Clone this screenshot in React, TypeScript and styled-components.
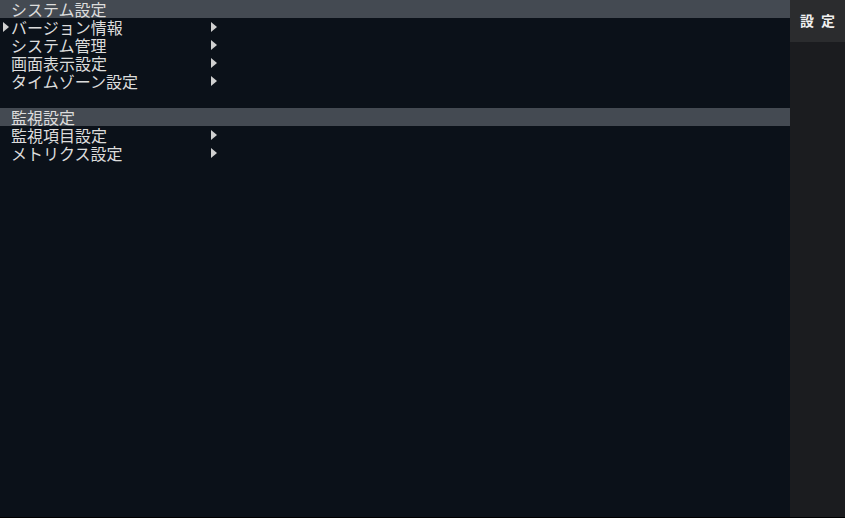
import * as React from 'react';
import styled, {createGlobalStyle} from 'styled-components';

const GlobalStyle = createGlobalStyle`
    html, body {
        margin: 0;
        padding: 0;
        background: #000;
    }
    body {
        font-family: "Noto Sans CJK JP", "Noto Sans", sans-serif;
    }
`;

const Screen = styled.div`
    display: flex;
    width: 845px;
    height: 517px;
    border-bottom: 1px solid #000;
    overflow: hidden;
`;

const Main = styled.div`
    flex: 1;
    background: #0b1119;
    display: flex;
    flex-direction: column;
`;

const Section = styled.div`
    display: flex;
    flex-direction: column;
    margin-bottom: 18px;
`;

const SectionTitle = styled.div`
    height: 18px;
    line-height: 18px;
    background: #444a52;
    color: #dcdcdc;
    font-size: 16px;
    padding-left: 11px;
`;

const Row = styled.div`
    position: relative;
    height: 18px;
    line-height: 18px;
    color: #dcdcdc;
    font-size: 16px;
    padding-left: 11px;
    width: 206px;
`;

const Triangle = styled.span<{ left: number }>`
    position: absolute;
    top: 4px;
    left: ${(props) => props.left}px;
    width: 0;
    height: 0;
    border-top: 5.5px solid transparent;
    border-bottom: 5.5px solid transparent;
    border-left: 6px solid #d0d0d0;
`;

const Sidebar = styled.div`
    width: 55px;
    background: #1b1c1f;
    display: flex;
    flex-direction: column;
`;

const Tab = styled.div`
    height: 42px;
    background: #2b2c2e;
    color: #f0f0f0;
    font-size: 14px;
    font-weight: bold;
    display: flex;
    align-items: center;
    justify-content: center;
    letter-spacing: 7px;
    padding-left: 7px;
    padding-bottom: 2px;
    box-sizing: border-box;
`;

interface ItemType {
    label: string;
    selected?: boolean;
}

const sections: { title: string; items: ItemType[] }[] = [
    {
        title: 'システム設定',
        items: [
            {label: 'バージョン情報', selected: true},
            {label: 'システム管理'},
            {label: '画面表示設定'},
            {label: 'タイムゾーン設定'},
        ],
    },
    {
        title: '監視設定',
        items: [
            {label: '監視項目設定'},
            {label: 'メトリクス設定'},
        ],
    },
];

export default function App() {
    return (
        <>
            <GlobalStyle/>
            <Screen>
                <Main>
                    {sections.map((s) => (
                        <Section key={s.title}>
                            <SectionTitle>{s.title}</SectionTitle>
                            {s.items.map((item) => (
                                <Row key={item.label}>
                                    {item.selected && <Triangle left={3}/>}
                                    {item.label}
                                    <Triangle left={211}/>
                                </Row>
                            ))}
                        </Section>
                    ))}
                </Main>
                <Sidebar>
                    <Tab>設定</Tab>
                </Sidebar>
            </Screen>
        </>
    );
}
